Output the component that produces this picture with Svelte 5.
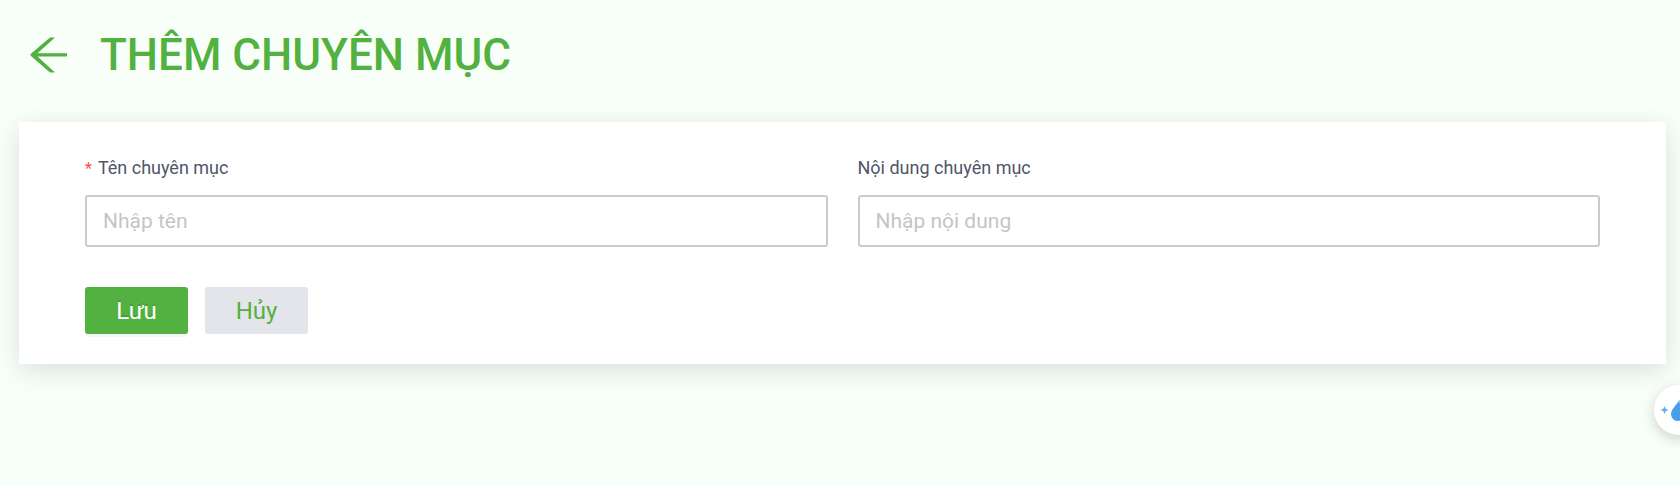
<script lang="ts">
  let name = $state('');
  let content = $state('');

  function goBack() {
    history.back();
  }

  function save(e: Event) {
    e.preventDefault();
  }

  function cancel() {
    name = '';
    content = '';
  }
</script>

<div class="page">
  <header class="heading">
    <button class="back" type="button" aria-label="Quay lại" onclick={goBack}>
      <svg viewBox="0 0 38 36" width="38" height="36" aria-hidden="true">
        <path d="M20 0.5h5L7.5 16.2H37v3.2H7.5L25 35.5h-5L1.2 19.2a1.9 1.9 0 0 1 0-2.8z" fill="currentColor" />
      </svg>
    </button>
    <h1>THÊM CHUYÊN MỤC</h1>
  </header>

  <form class="card" onsubmit={save} novalidate>
    <div class="fields">
      <div class="field">
        <label class="required" for="name">Tên chuyên mục</label>
        <input id="name" type="text" placeholder="Nhập tên" required bind:value={name} />
      </div>
      <div class="field">
        <label for="content">Nội dung chuyên mục</label>
        <input id="content" type="text" placeholder="Nhập nội dung" bind:value={content} />
      </div>
    </div>

    <div class="actions">
      <button class="btn primary" type="submit">Lưu</button>
      <button class="btn" type="button" onclick={cancel}>Hủy</button>
    </div>
  </form>
</div>

<button class="assistant" type="button" aria-label="Trợ lý">
  <svg viewBox="0 0 50 50" width="50" height="50" aria-hidden="true">
    <path d="M10.500 21l1.200 2.800 2.800 1.200-2.800 1.200-1.200 2.800-1.200-2.800-2.800-1.200 2.800-1.200z" fill="#62b2f2" />
    <path d="M25 15c-1 4-8 8.500-8 14.500a7 7 0 0 0 7 6.500c5 0 8-3 8-7.500 0-5-5-7.500-7-13.500z" fill="#4a9fea" />
    <path d="M25 15c0 2.500 1 5 3 6.500V15z" fill="#a5d1f7" />
  </svg>
</button>

<style>
  :global(body) {
    background: #f8fff9;
    font-family: Roboto, "Liberation Sans", sans-serif;
    overflow-x: hidden;
  }

  .page {
    padding: 24px 14px 40px 19px;
  }

  .heading {
    display: flex;
    align-items: center;
    gap: 32px;
    padding-left: 11px;
    margin-bottom: 36px;
    color: #52b140;
  }

  .back {
    display: flex;
    padding: 0;
    border: none;
    background: none;
    color: inherit;
    cursor: pointer;
  }

  h1 {
    margin: 0;
    font-size: 44px;
    font-weight: 500;
    line-height: 62px;
  }

  .card {
    background: #fff;
    padding: 32px 66px 30px;
    box-shadow: 0 6px 24px rgba(0, 0, 0, 0.12);
  }

  .fields {
    display: grid;
    grid-template-columns: 1fr 1fr;
    gap: 30px;
  }

  .field {
    display: flex;
    flex-direction: column;
    gap: 13px;
  }

  label {
    font-size: 18px;
    line-height: 28px;
    color: #4f5669;
  }

  .required::before {
    content: "*";
    margin-right: 6px;
    font-size: 16px;
    line-height: 1;
    color: #f5514d;
  }

  input {
    box-sizing: border-box;
    width: 100%;
    height: 52px;
    padding: 0 16px;
    border: 2px solid #cbcbd3;
    border-radius: 3px;
    background: #fff;
    color: #4f5669;
    font: inherit;
    font-size: 21px;
    outline: none;
  }
  input::placeholder { color: #c5c5c5; }
  input:focus { border-color: #52b140; }

  .actions {
    display: flex;
    gap: 17px;
    margin-top: 40px;
  }

  .btn {
    min-width: 103px;
    height: 47px;
    padding: 0 24px;
    border: none;
    border-radius: 3px;
    background: #e4e4eb;
    color: #52b140;
    font: inherit;
    font-size: 24px;
    cursor: pointer;
  }

  .primary {
    background: #52b140;
    color: #fff;
    box-shadow: 0 3px 0 rgba(0, 0, 0, 0.04);
    text-shadow: 0 -2px 0 rgba(0, 0, 0, 0.12);
  }

  .assistant {
    position: fixed;
    top: 385px;
    right: -24px;
    width: 50px;
    height: 50px;
    padding: 0;
    border: none;
    border-radius: 50%;
    background: #fff;
    box-shadow: 0 4px 14px rgba(0, 0, 0, 0.18);
    cursor: pointer;
  }
</style>
